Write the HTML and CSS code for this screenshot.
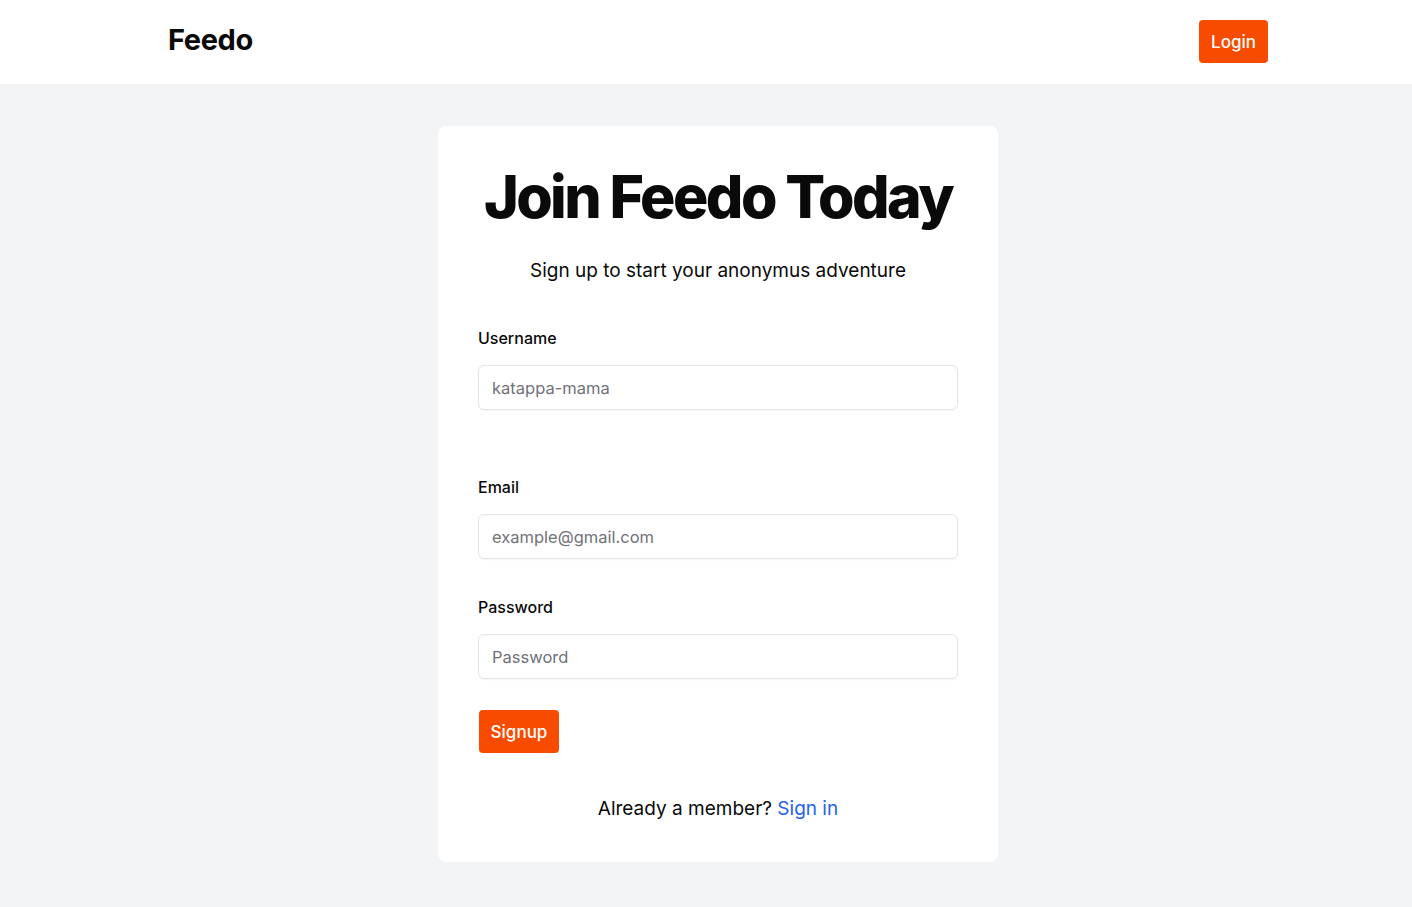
FILE: index.html
```html
<!DOCTYPE html>
<html lang="en">
<head>
<meta charset="utf-8">
<title>Feedo</title>
<link rel="stylesheet" href="styles.css">
</head>
<body>
<header class="topbar">
  <div class="topbar-inner">
    <a class="brand" href="#">Feedo</a>
    <button class="btn btn-login" type="button">Login</button>
  </div>
</header>
<main class="page">
  <section class="card">
    <h1 class="title">Join Feedo Today</h1>
    <p class="subtitle">Sign up to start your anonymus adventure</p>
    <form class="form">
      <div class="field field-username">
        <label class="label" for="username">Username</label>
        <input class="input" id="username" type="text" placeholder="katappa-mama">
      </div>
      <div class="field">
        <label class="label" for="email">Email</label>
        <input class="input" id="email" type="email" placeholder="example@gmail.com">
      </div>
      <div class="field">
        <label class="label" for="password">Password</label>
        <input class="input" id="password" type="password" placeholder="Password">
      </div>
      <div class="actions">
        <button class="btn btn-signup" type="button">Signup</button>
      </div>
    </form>
    <p class="footer-text">Already a member? <a class="link" href="#">Sign in</a></p>
  </section>
</main>
</body>
</html>
```

FILE: styles.css
```css
* { box-sizing: border-box; }
html, body { margin: 0; padding: 0; }
body {
  font-family: Inter, "Noto Sans", sans-serif;
  color: #0a0a0a;
  background: #f3f4f6;
  min-height: 907px;
}
.topbar {
  background: #ffffff;
  height: 84px;
}
.topbar-inner {
  width: 1100px;
  margin-left: 168px;
  height: 84px;
  display: flex;
  align-items: center;
  justify-content: space-between;
}
.brand {
  font-size: 29px;
  font-weight: 700;
  color: #0a0a0a;
  text-decoration: none;
  letter-spacing: -0.4px;
  margin-top: -6px;
}
.btn {
  font-family: Inter, "Noto Sans", sans-serif;
  border: none;
  background: #f74b00;
  color: #ffffff;
  border-radius: 4px;
  cursor: pointer;
  font-weight: 500;
}
.btn-login {
  width: 69px;
  height: 43px;
  font-size: 17px;
  margin-top: -1px;
}
.page {
  padding-top: 42px;
  padding-bottom: 45px;
  display: flex;
  justify-content: center;
  padding-left: 24px;
}
.card {
  width: 560px;
  background: #ffffff;
  border-radius: 8px;
  padding: 35px 40px 39px;
}
.title {
  margin: 0;
  text-align: center;
  font-size: 59px;
  line-height: 72px;
  font-weight: 800;
  letter-spacing: -2.55px;
  white-space: nowrap;
}
.subtitle {
  margin: 24px 0 0;
  text-align: center;
  font-size: 19px;
  line-height: 28px;
}
.form {
  margin-top: 41px;
  display: flex;
  flex-direction: column;
}
.field {
  display: flex;
  flex-direction: column;
  margin-bottom: 36px;
}
.field-username { margin-bottom: 65px; }
.label {
  font-size: 16px;
  font-weight: 500;
  line-height: 24px;
  margin-bottom: 15px;
}
.input {
  height: 45px;
  border: 1px solid #e4e4e7;
  border-radius: 6px;
  padding: 0 13px;
  font-family: Inter, "Noto Sans", sans-serif;
  font-size: 16.5px;
  color: #0a0a0a;
  background: #ffffff;
  box-shadow: 0 1px 2px rgba(0,0,0,0.04);
}
.input::placeholder { color: #71717a; }
.actions { margin-top: -5px; }
.btn-signup {
  width: 80px;
  height: 43px;
  font-size: 17px;
  margin-left: 1px;
}
.footer-text {
  margin: 42px 0 0;
  text-align: center;
  font-size: 19px;
  line-height: 28px;
}
.link { color: #2563eb; text-decoration: none; }
```
